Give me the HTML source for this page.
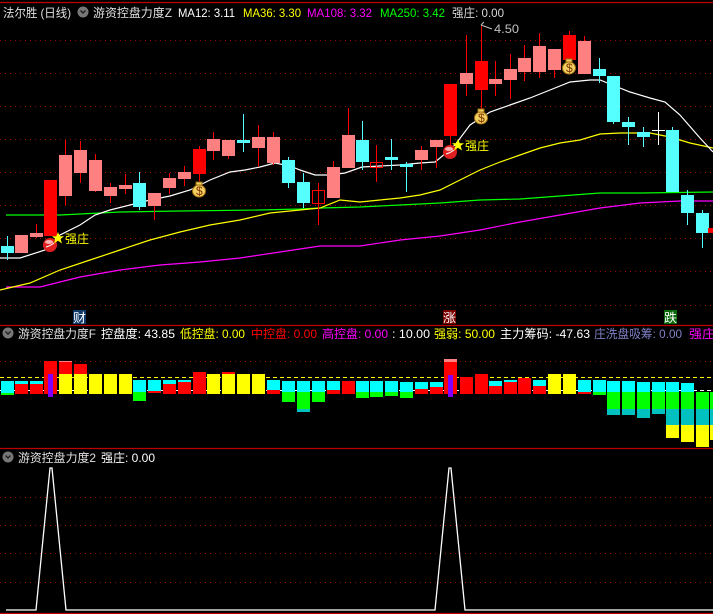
<!DOCTYPE html>
<html><head><meta charset="utf-8">
<style>
html,body{margin:0;padding:0;background:#000;width:713px;height:614px;overflow:hidden}
svg{display:block}
text{font-family:"Liberation Sans","Noto Sans CJK SC",sans-serif;font-size:12px}
</style></head><body>
<svg id="s" width="713" height="614" xmlns="http://www.w3.org/2000/svg">
<rect width="713" height="614" fill="#000"/>
<g id="grid"></g>
<g id="lines"></g>
<g id="cand"></g>
<g id="bars"></g>
<!-- headers -->
<circle cx="83" cy="12" r="5.5" fill="#777"/><path d="M80.5 10.5l2.5 2.5 2.5-2.5" stroke="#222" stroke-width="1.5" fill="none"/>
<text x="3" y="17" fill="#e0e0e0" textLength="68" lengthAdjust="spacingAndGlyphs">法尔胜 (日线)</text>
<text x="93" y="17" fill="#e0e0e0" textLength="79" lengthAdjust="spacingAndGlyphs">游资控盘力度Z</text>
<text x="178" y="17" fill="#fff" textLength="57" lengthAdjust="spacingAndGlyphs">MA12: 3.11</text>
<text x="243" y="17" fill="#ffff00" textLength="58" lengthAdjust="spacingAndGlyphs">MA36: 3.30</text>
<text x="307" y="17" fill="#ff00ff" textLength="65" lengthAdjust="spacingAndGlyphs">MA108: 3.32</text>
<text x="380" y="17" fill="#00ff00" textLength="65" lengthAdjust="spacingAndGlyphs">MA250: 3.42</text>
<text x="452" y="17" fill="#d8d8d8" textLength="52" lengthAdjust="spacingAndGlyphs">强庄: 0.00</text>
<text x="494" y="33" fill="#c0c0c0" textLength="25" lengthAdjust="spacingAndGlyphs">4.50</text>
<path d="M481 25 L484 22 M481 25 L492 29" stroke="#c0c0c0" fill="none"/>
<!-- labels -->
<rect x="73" y="310" width="13" height="14" fill="#103a6a"/><text x="73" y="322" fill="#fff" textLength="13" lengthAdjust="spacingAndGlyphs">财</text>
<rect x="443" y="310" width="13" height="14" fill="#7a0000"/><text x="443" y="322" fill="#fff" textLength="13" lengthAdjust="spacingAndGlyphs">涨</text>
<rect x="664" y="310" width="13" height="14" fill="#0a6a0a"/><text x="664" y="322" fill="#fff" textLength="13" lengthAdjust="spacingAndGlyphs">跌</text>
<circle cx="8" cy="333" r="5.5" fill="#777"/><path d="M5.5 331.5l2.5 2.5 2.5-2.5" stroke="#222" stroke-width="1.5" fill="none"/>
<text x="18" y="338" fill="#e0e0e0" textLength="78" lengthAdjust="spacingAndGlyphs">游资控盘力度F</text>
<text x="101" y="338" fill="#fff" textLength="74" lengthAdjust="spacingAndGlyphs">控盘度: 43.85</text>
<text x="180" y="338" fill="#ffff00" textLength="65" lengthAdjust="spacingAndGlyphs">低控盘: 0.00</text>
<text x="251" y="338" fill="#ff0000" textLength="66" lengthAdjust="spacingAndGlyphs">中控盘: 0.00</text>
<text x="322" y="338" fill="#ff00ff" textLength="66" lengthAdjust="spacingAndGlyphs">高控盘: 0.00</text>
<text x="392" y="338" fill="#fff" textLength="38" lengthAdjust="spacingAndGlyphs">: 10.00</text>
<text x="434" y="338" fill="#ffff00" textLength="61" lengthAdjust="spacingAndGlyphs">强弱: 50.00</text>
<text x="500" y="338" fill="#fff" textLength="90" lengthAdjust="spacingAndGlyphs">主力筹码: -47.63</text>
<text x="594" y="338" fill="#8080c8" textLength="88" lengthAdjust="spacingAndGlyphs">庄洗盘吸筹: 0.00</text>
<text x="689" y="338" fill="#ff00ff" textLength="26" lengthAdjust="spacingAndGlyphs">强庄</text>
<circle cx="8" cy="457" r="5.5" fill="#777"/><path d="M5.5 455.5l2.5 2.5 2.5-2.5" stroke="#222" stroke-width="1.5" fill="none"/>
<text x="18" y="462" fill="#e0e0e0" textLength="78" lengthAdjust="spacingAndGlyphs">游资控盘力度2</text>
<text x="101" y="462" fill="#fff" textLength="54" lengthAdjust="spacingAndGlyphs">强庄: 0.00</text>
<!-- bottom triangles -->
<polyline points="6,610 36,610 50,468 52,468 66,610 435,610 449,468 451,468 465,610 713,610" stroke="#fff" stroke-width="1.3" fill="none"/>
<!-- markers -->
<g id="mk"></g>
<text x="65" y="243" fill="#ffff00" textLength="24" lengthAdjust="spacingAndGlyphs">强庄</text>
<text x="465" y="150" fill="#ffff00" textLength="24" lengthAdjust="spacingAndGlyphs">强庄</text>
</svg>
<script>
var NS="http://www.w3.org/2000/svg";
function el(p,t,a){var e=document.createElementNS(NS,t);for(var k in a)e.setAttribute(k,a[k]);document.getElementById(p).appendChild(e);return e;}
[40,73,106,139,172,205,238,271,305,361,497,525,553,582].forEach(function(y){el('grid','line',{x1:0,x2:713,y1:y+.5,y2:y+.5,stroke:'#a00000','stroke-dasharray':'1,4'});});
[2,325,448,613].forEach(function(y){el('grid','line',{x1:0,x2:713,y1:y+.5,y2:y+.5,stroke:'#c00000','stroke-width':1.2});});
el('grid','line',{x1:0,x2:713,y1:377.5,y2:377.5,stroke:'#ffff00','stroke-dasharray':'4,3'});
el('grid','line',{x1:0,x2:713,y1:390.5,y2:390.5,stroke:'#fff','stroke-dasharray':'4,3'});
function pl(c,pts){el('lines','polyline',{points:pts,stroke:c,fill:'none','stroke-width':1.2});}
pl('#00ff00','6,215 60,215 120,212 180,211 260,210 300,209 320,208 360,207 400,205 440,203 480,200 520,199 560,196 600,193 640,193 713,192');
pl('#ff00ff','6,287 40,287 80,277 120,270 160,265 200,262 240,258 280,252 320,246 360,246 400,240 440,236 480,230 520,222 560,215 600,208 640,203 680,201 713,201');
pl('#ffff00','0,290 30,283 60,270 90,260 120,250 150,240 180,232 210,225 240,220 270,213 300,210 320,208 340,200 360,202 380,200 400,198 420,195 440,190 460,180 480,170 500,162 520,155 540,148 560,143 580,140 600,134 620,133 650,133 670,137 690,143 713,148');
pl('#fff','0,258 20,258 45,250 60,235 80,225 95,215 110,210 130,205 150,200 170,196 190,190 210,180 230,172 245,170 260,167 275,163 290,166 300,170 315,175 330,175 345,173 362,167 380,166 400,165 420,163 435,162 440,158 455,145 470,125 490,112 510,105 530,98 550,90 570,82 590,80 600,80 610,84 630,92 650,98 665,102 680,115 700,138 713,152');
var P='#ff8080',R='#ff0000',C='#55ffff';
var cs=[[7,'c',246,253,236,260],[21,'p',235,253,235,253],[36,'p',233,237,224,238],[50,'r',180,236,180,236],[65,'p',155,196,140,205],[80,'p',150,173,141,183],[95,'p',160,191,154,192],[110,'p',187,196,183,203],[125,'p',185,189,174,194],[139,'c',183,207,172,210],[154,'p',193,206,193,220],[169,'p',178,188,173,194],[184,'p',172,179,166,186],[199,'r',149,174,146,181],[213,'p',139,151,132,160],[228,'p',140,156,140,159],[243,'c',140,143,114,152],[258,'p',137,148,125,167],[273,'p',137,163,132,165],[288,'c',160,183,157,188],[303,'c',182,203,173,208],[318,'h',190,203,183,225],[333,'p',167,198,161,198],[348,'p',135,168,108,168],[362,'c',140,162,121,170],[376,'h',162,167,145,182],[391,'c',157,160,139,170],[406,'c',164,167,162,192],[421,'p',150,160,146,170],[436,'p',140,147,140,168],[450,'r',84,136,84,147],[466,'p',73,84,35,96],[481,'r',61,90,26,117],[495,'p',79,84,61,96],[510,'p',69,80,54,99],[524,'p',58,72,45,81],[539,'p',46,72,33,78],[554,'p',49,70,49,78],[569,'r',35,60,31,70],[584,'p',41,74,36,74],[599,'c',69,76,58,83],[613,'c',76,122,76,124],[628,'c',122,127,117,145],[643,'c',132,137,127,147],[658,'w',130,130,112,145],[672,'c',130,192,127,192],[687,'c',195,213,190,225],[702,'c',213,233,210,248],[714,'r',228,233,228,233]];
cs.forEach(function(c){var x=c[0],t=c[1];var col=t=='p'?P:t=='r'?R:t=='c'?C:t=='h'?R:'#fff';
 var wc=t=='p'?R:col;
 el('cand','line',{x1:x+.5,x2:x+.5,y1:c[4],y2:c[5],stroke:wc});
 if(t=='h')el('cand','rect',{x:x-6+.5,y:c[2]+.5,width:12,height:c[3]-c[2],fill:'none',stroke:R});
 else if(t=='w')el('cand','line',{x1:x-6,x2:x+7,y1:130.5,y2:130.5,stroke:'#fff'});
 else el('cand','rect',{x:x-6,y:c[2],width:13,height:Math.max(2,c[3]-c[2]),fill:col});
});
var Y='#ffff00',G='#00ff00',T='#00c0c0',Cy='#00ffff',Rd='#ff0000';
var bs=[[7,[[Cy,381,393],[G,393,395]]],[21,[[Cy,381,384],[Rd,384,394]]],[36,[[Cy,381,384],[Rd,384,394]]],[50,[[Rd,361,394]]],[65,[[P,361,362],[Rd,362,374],[Y,374,394]]],[80,[[Rd,364,374],[Y,374,394]]],[95,[[Y,374,394]]],[110,[[Y,374,394]]],[125,[[Y,374,394]]],[139,[[Cy,380,392],[G,392,401]]],[154,[[Cy,380,391],[Rd,391,393]]],[169,[[Cy,380,384],[Rd,384,394]]],[184,[[Cy,380,382],[Rd,382,394]]],[199,[[Rd,372,394]]],[213,[[Y,374,394]]],[228,[[Rd,372,374],[Y,374,394]]],[243,[[Y,374,394]]],[258,[[Y,374,394]]],[273,[[Cy,380,390],[Rd,390,394]]],[288,[[Cy,381,392],[G,392,402]]],[303,[[Cy,381,392],[G,392,409],[T,409,412]]],[318,[[Cy,381,392],[G,392,402]]],[333,[[Cy,381,390],[Rd,390,394]]],[348,[[Rd,381,394]]],[362,[[Cy,381,392],[G,392,398]]],[376,[[Cy,381,392],[G,392,397]]],[391,[[Cy,381,392],[G,392,396]]],[406,[[Cy,382,392],[G,392,398]]],[421,[[Cy,382,389],[Rd,389,394]]],[436,[[Cy,382,387],[Rd,387,394]]],[450,[[P,359,362],[Rd,362,394]]],[466,[[Rd,377,394]]],[481,[[Rd,374,394]]],[495,[[Cy,381,386],[Rd,386,394]]],[510,[[Cy,380,382],[Rd,382,394]]],[524,[[Rd,378,394]]],[539,[[Cy,380,386],[Rd,386,394]]],[554,[[Y,374,394]]],[569,[[Y,374,394]]],[584,[[Cy,380,392],[Rd,392,394]]],[599,[[Cy,380,392],[G,392,395]]],[613,[[Cy,381,392],[G,392,409],[T,409,415]]],[628,[[Cy,381,392],[G,392,409],[T,409,415]]],[643,[[Cy,382,392],[G,392,409],[T,409,418]]],[658,[[Cy,382,392],[G,392,409],[T,409,414]]],[672,[[Cy,382,392],[G,392,409],[T,409,425],[Y,425,438]]],[687,[[Cy,383,392],[G,392,409],[T,409,425],[Y,425,442]]],[702,[[G,392,409],[T,409,425],[Y,425,447]]],[716,[[G,392,409],[T,409,425],[Y,425,440]]]];
bs.forEach(function(b){b[1].forEach(function(s){el('bars','rect',{x:b[0]-6,y:s[1],width:13,height:s[2]-s[1],fill:s[0]});});});
el('bars','rect',{x:48,y:374,width:5,height:23,fill:'#8000ff'});
el('bars','rect',{x:448,y:375,width:5,height:22,fill:'#8000ff'});
[[50,245],[450,152]].forEach(function(p){
 el('mk','circle',{cx:p[0],cy:p[1],r:7,fill:'#e02020'});
 el('mk','ellipse',{cx:p[0]-1,cy:p[1]-3,rx:4,ry:2,fill:'#ffb0b0'});
 el('mk','path',{d:'M'+(p[0]-4)+' '+(p[1]+2)+'q4 -1 8 -4',stroke:'#fff',fill:'none','stroke-width':1});
 var x=p[0]+8,y=p[1]-7;
 el('mk','polygon',{points:[x,y-6,x+1.8,y-1.8,x+6,y-1.8,x+2.6,y+1,x+4,y+5.5,x,y+2.8,x-4,y+5.5,x-2.6,y+1,x-6,y-1.8,x-1.8,y-1.8].join(' '),fill:'#ffff00'});
});
[[199,190],[481,117],[569,67]].forEach(function(p){
 el('mk','ellipse',{cx:p[0],cy:p[1]+1,rx:6.5,ry:6,fill:'#f0d060',stroke:'#a07010'});
 el('mk','rect',{x:p[0]-3,y:p[1]-8,width:6,height:3,fill:'#f0d060',stroke:'#a07010'});
 var t=el('mk','text',{x:p[0]-3,y:p[1]+5,fill:'#803000','font-size':'10'});t.textContent='$';
});
</script>
</body></html>
